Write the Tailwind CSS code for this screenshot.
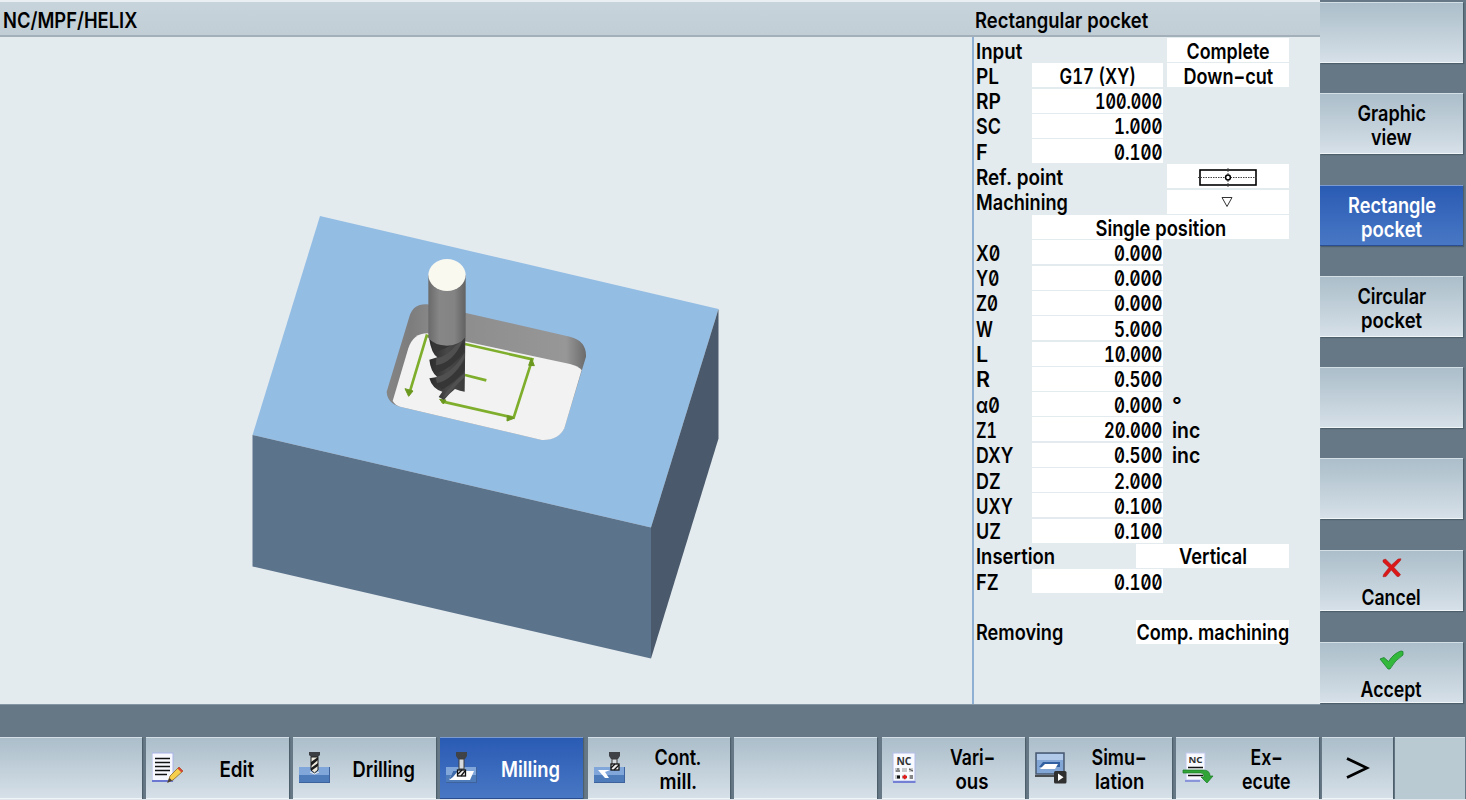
<!DOCTYPE html>
<html lang="en">
<head>
<meta charset="utf-8">
<title>NC/MPF/HELIX</title>
<script src="https://cdn.jsdelivr.net/npm/@tailwindcss/browser@4"></script>
</head>
<body class="w-[1466px] h-[800px] overflow-hidden bg-[#667886] text-black font-[580] text-[21.5px] leading-[24px] font-['Inter','Liberation_Sans',sans-serif] [font-feature-settings:'zero','tnum']">
<div class="flex flex-col w-[1466px] h-[800px]">
  <div class="flex h-[705px]">
    <main class="flex flex-col w-[1320px] bg-[#e4ebee] border-b border-[#8496a2]">
      <header class="flex shrink-0 h-[37px] pt-[6px] pl-[3px] bg-linear-to-b from-[#c8d4db] to-[#c2ced6] border-t-2 border-t-[#e9eff2] border-b-2 border-b-[#a3b0b9]">
        <div class="w-[972px]"><span data-w="134" class="inline-block whitespace-nowrap origin-left">NC/MPF/HELIX</span></div>
        <div class="w-[300px]"><span data-w="173" class="inline-block whitespace-nowrap origin-left">Rectangular pocket</span></div>
      </header>
      <div class="flex flex-1 min-h-0">
        <svg class="w-[972px] h-[666px] shrink-0" viewBox="0 37 972 666">
          <defs>
            <linearGradient id="shank"><stop offset="0" stop-color="#6a6a6a"/><stop offset=".3" stop-color="#878787"/><stop offset=".7" stop-color="#838383"/><stop offset="1" stop-color="#626262"/></linearGradient>
            <linearGradient id="wall"><stop offset="0" stop-color="#858585"/><stop offset=".12" stop-color="#7d7d7d"/><stop offset=".25" stop-color="#8b8b8b"/><stop offset=".9" stop-color="#979797"/><stop offset="1" stop-color="#6b6b6b"/></linearGradient>
            <linearGradient id="flute"><stop offset="0" stop-color="#2b2b2b"/><stop offset=".5" stop-color="#484848"/><stop offset="1" stop-color="#3b3b3b"/></linearGradient>
          </defs>
          <path d="M320 216 718.500 309 651 527.500 252.500 435Z" fill="#94bde4"/>
          <path d="M252.500 435 651 527.500V658.500L252.500 566.500Z" fill="#5c738c"/>
          <path d="M718.500 309V438.500L651 658.500V527.500Z" fill="#4a5a6c"/>
          <g transform="translate(370 240) scale(.33333)">
            <path d="M50 455 118 230Q130 190 172 193L600 290Q650 303 648 350L583 565Q566 600 515 600L90 500Q52 490 50 455Z" fill="url(#wall)"/>
            <path d="M68 483 115 325Q130 280 172 280L600 372Q625 378 635 390L583 565Q565 602 515 600L90 500Q75 495 68 483Z" fill="#f1f2f1"/>
            <g stroke="#7fae2c" stroke-width="8" fill="none">
              <path d="M185 292 170 287 118 460M285 312 487 358 431 533 215 484M285 405 349 421"/>
            </g>
            <path d="M105 446 129 453 116 469ZM476 376 484 354 493 377ZM412 526 432 535 411 543ZM209 478 228 480 220 492Z" fill="#6b981f" stroke="#6b981f" stroke-width="3"/>
            <path d="M177 294Q231 335 286 290L284 455 270 452 255 447 238 462 222 480 206 471 217 455Q187 447 178 415L202 411Q182 396 178 359L202 352Q184 340 177 294Z" fill="url(#flute)"/>
            <path d="M185 302 243 316Q206 337 190 334ZM196 378Q238 370 280 305L284 332Q251 382 200 399ZM198 433Q246 418 284 362L284 392Q250 430 216 449Z" fill="#363636"/>
            <path d="M199 354Q230 352 258 315L277 303Q251 367 198 376ZM197 411Q244 403 284 338V354Q248 420 201 429ZM219 475Q231 442 284 399V411Q246 449 236 462Z" fill="#505050"/>
            <path d="M175 105V294Q193 316 231 317 269 316 287 290V105Z" fill="url(#shank)"/>
            <ellipse cx="231" cy="105" rx="56" ry="48" fill="#f9f9f0"/>
          </g>
        </svg>
        <section id="form" class="flex flex-col flex-1 pt-[1px] pl-[2px] border-l-2 border-[#8fb0d2]"></section>
      </div>
    </main>
    <nav id="side" class="flex flex-col w-[146px] pt-[2px] text-center"></nav>
  </div>
  <div class="h-[32px] shrink-0"></div>
  <nav id="bottom" class="flex h-[62px] shrink-0 text-center"></nav>
  <div class="h-[1px] bg-[#dfe5ea]"></div>
</div>
<script>
const fit = (t, w, o = 'origin-center') => `<span data-w="${w}" class="inline-block whitespace-nowrap ${o}">${t}</span>`;
const refIcon = '<svg class="w-[60px] h-[20px]" viewBox="0 0 60 20"><rect x="2" y="3" width="56" height="15" fill="none" stroke="#000" stroke-width="1.6"/><path d="M0 10.500H60M30 1V20" stroke="#444" stroke-dasharray="1.500 1"/><circle cx="30" cy="10.500" r="2.400" fill="#fff" stroke="#000" stroke-width="1.500"/></svg>';
const triIcon = '<svg class="w-[12px] h-[12px] mr-[2px]" viewBox="0 0 12 12"><path d="M1 1.500H11L6 10.500Z" fill="none" stroke="#333"/></svg>';
// label, label width, value, value width, layout, unit or second value, its width
const rows = [
  ['Input', 46, '', 0, 'R', 'Complete', 83],
  ['PL', 23, 'G17 (XY)', 76, 'B', 'Down−cut', 90],
  ['RP', 25, '100.000', 67, 'N'], ['SC', 25, '1.000', 48, 'N'], ['F', 12, '0.100', 48, 'N'],
  ['Ref. point', 87, '', 0, 'I', refIcon], ['Machining', 92, '', 0, 'I', triIcon],
  ['', 0, 'Single position', 131, 'S'],
  ['X0', 24, '0.000', 48, 'N'], ['Y0', 23, '0.000', 48, 'N'], ['Z0', 22, '0.000', 48, 'N'],
  ['W', 17, '5.000', 48, 'N'], ['L', 12, '10.000', 58, 'N'], ['R', 14, '0.500', 48, 'N'],
  ['α0', 24, '0.000', 48, 'N', '°', 10], ['Z1', 21, '20.000', 58, 'N', 'inc', 28],
  ['DXY', 37, '0.500', 48, 'N', 'inc', 28], ['DZ', 25, '2.000', 48, 'N'],
  ['UXY', 37, '0.100', 48, 'N'], ['UZ', 25, '0.100', 48, 'N'],
  ['Insertion', 79, 'Vertical', 68, 'V'], ['FZ', 23, '0.100', 48, 'N'],
  ['', 0, '', 0, ''], ['Removing', 87, 'Comp. machining', 153, 'V']
];
const box = 'flex h-[24px] items-center bg-white pt-[1px] shrink-0 overflow-visible';
document.getElementById('form').innerHTML = rows.map(([l, lw, v, vw, k, u, uw]) => {
  const label = w => `<div class="${w} shrink-0 pt-[0.5px]">${l ? fit(l, lw, 'origin-left') : ''}</div>`;
  let c = '';
  if (k === 'N') c = label('w-[56px]') + `<div class="${box} w-[131px] pr-[1px] justify-end">${fit(v, vw, 'origin-right')}</div>` + (u ? `<div class="pl-[9px] pt-[0.5px]">${fit(u, uw, 'origin-left')}</div>` : '');
  if (k === 'B') c = label('w-[56px]') + `<div class="${box} w-[131px] justify-center">${fit(v, vw)}</div><div class="${box} w-[122px] ml-[4px] justify-center">${fit(u, uw)}</div>`;
  if (k === 'R') c = label('w-[191px]') + `<div class="${box} w-[122px] justify-center">${fit(u, uw)}</div>`;
  if (k === 'I') c = label('w-[191px]') + `<div class="${box} w-[122px] justify-center">${u}</div>`;
  if (k === 'S') c = label('w-[56px]') + `<div class="${box} w-[257px] justify-center">${fit(v, vw)}</div>`;
  if (k === 'V') c = label('w-[160px]') + `<div class="${box} w-[153px] justify-center">${fit(v, vw)}</div>`;
  return `<div class="flex h-[25.3px] shrink-0">${c}</div>`;
}).join('');

const key = 'bg-linear-to-b from-[#abbeca] to-[#d6e0e8] border-t border-t-[#d3dfe6] border-b border-b-[#f0f5f8] shadow-[1px_1px_1px_#4e5f6c]';
const keyOn = 'bg-linear-to-b from-[#2a5bb4] to-[#4877c4] border-t border-t-[#7b9bd0] border-b border-b-[#2b4e93] text-white shadow-[1px_1px_1px_#4e5f6c]';
const cross = '<svg class="w-[20px] h-[20px]" viewBox="0 0 20 20"><path d="M1 2 3.500 1 9.500 7 16 1 19 .800 18.500 2.500 12 9.500 18.500 16.500 17 18.500 15 18.500 9.300 12 4 18.500 1 18.800 1.500 16.500 7 9.500 1 4Z" fill="#db1717" stroke="#a51818" stroke-width=".5"/></svg>';
const check = '<svg class="w-[25px] h-[20px]" viewBox="0 0 25 20"><path d="M1 9 5 7.500 9.500 11.500Q15 3 22 1L24 1.500V5Q16 10 11 19H9Z" fill="#32b83b" stroke="#16832a" stroke-width=".8"/></svg>';
const side = [
  ['h-[61px]', ''],
  ['mt-[30px] h-[61px]', fit('Graphic', 69) + '<br>' + fit('view', 41)],
  ['mt-[31px] h-[61px]', fit('Rectangle', 88) + '<br>' + fit('pocket', 61), 1],
  ['mt-[30px] h-[61px]', fit('Circular', 69) + '<br>' + fit('pocket', 61)],
  ['mt-[30px] h-[61px]', ''], ['mt-[30px] h-[61px]', ''],
  ['mt-[31px] h-[61px]', cross, 0, fit('Cancel', 59)],
  ['mt-[31px] h-[61px]', check, 0, fit('Accept', 61)]
];
document.getElementById('side').innerHTML = side.map(([h, t, on, cap]) =>
  `<div class="${h} w-[143px] shrink-0 ${on ? keyOn : key}">${cap ? `<div class="flex justify-center h-[34px] pt-[7px]">${t}</div><div>${cap}</div>` : `<div class="pt-[7px]">${t}</div>`}</div>`).join('');

const S = b => `<svg class="w-[32px] h-[32px] shrink-0" viewBox="0 0 32 32">${b}</svg>`;
const slab = '<rect x="0" y="15" width="31" height="9" fill="#80a6da"/><rect x="0" y="23" width="31" height="8" fill="#4e7cba"/><path d="M0 30.500H31M30.500 15V31" stroke="#3d629c"/>';
const mill = x => `<path d="M${x} 0H${x + 11}V4L${x + 9} 7H${x + 2}L${x} 4Z" fill="#3f4246"/><rect x="${x + 3}" y="7" width="5" height="10" fill="#d5dade" stroke="#3c3c3c"/>`;
const pen = S('<rect x="0" y="1" width="21" height="28" fill="#f7f9ff" stroke="#a9b2e8"/><path d="M0 29H21" stroke="#6a78d2" stroke-width="2"/><path d="M3 6.500H18M3 10.500H18M3 14.500H18M3 18.500H18M3 22.500H15" stroke="#111" stroke-width="1.500"/><path d="M16 30 18 24 27 15 31 19 21 28Z" fill="#f6cf4d" stroke="#8a6925" stroke-width=".8"/><path d="M25.500 16.500 27 15 31 19 29.500 20.500Z" fill="#d7433a"/><path d="M15 31 17.500 26 20 28.500Z" fill="#443b38"/>');
const drill = S(slab + '<path d="M10 0H21V3L19 5H12L10 3Z" fill="#3b3e42"/><path d="M12 5H19V18L15.500 21 12 18Z" fill="#ece9dc" stroke="#222"/><path d="M12 10 19 5V8L12 14ZM12 16 19 11V14L12 19Z" fill="#1c1c1c"/><path d="M11 20 15.500 22 20 20" stroke="#eee" fill="none"/>');
const mil = S(slab + '<path d="M7 19H28L24 28H3Z" fill="#fff"/><path d="M7 19H12L7 25 3 28Z" fill="#3d6aaa"/>' + mill(10) + '<rect x="11.500" y="18" width="8" height="6" fill="#eee" stroke="#111" stroke-width="1.300"/><path d="M12 22 16 18M15 24 19 19" stroke="#111" stroke-width="1.300"/>');
const cont = S(slab + '<path d="M4 18H16L11 20 15 26H11Z" fill="#fff"/>' + mill(15) + '<rect x="17" y="12" width="8" height="6" fill="#eee" stroke="#111" stroke-width="1.300"/><path d="M17 16 21 12M20 18 25 13" stroke="#111" stroke-width="1.300"/>');
const vari = S('<rect x="5" y="1" width="22" height="28" fill="#f8faff" stroke="#b3bbea"/><path d="M5 30H27.500" stroke="#7380d4" stroke-width="2"/><text x="8.500" y="13" font-size="10" font-weight="700" textLength="15" lengthAdjust="spacingAndGlyphs" font-family="Noto Sans" fill="#333">NC</text><path d="M7 16H12V20H7ZM14 16H19V20H14ZM21 16H25V20H21ZM7 23H12V27H7ZM14 23H19V27H14ZM21 23H25V27H21Z" fill="#c8c9cb"/><path d="M8 19H12M9 17H11M21 17 25 19M22 24H25M22 26H25" stroke="#444"/><rect x="9" y="23.500" width="3" height="3" fill="#111"/><path d="M14.500 25H19M16.700 22.700V27.300" stroke="#e01b1b" stroke-width="2"/>');
const simu = S('<rect x="1" y="1" width="28" height="21" fill="#82a6d5" stroke="#495a70" stroke-width="1.500"/><path d="M2 2H28V8H2Z" fill="#b2cae9"/><path d="M8 10H25V15H4Z" fill="#315f9f"/><path d="M10 12H23L20 17H5Z" fill="#fff"/><path d="M0 24H24" stroke="#222" stroke-width="1.500"/><rect x="19" y="19" width="12.500" height="12.500" rx="1.500" fill="#303030"/><path d="M23 21.500 28.500 25.300 23 29Z" fill="#fff"/>');
const exec = S('<rect x="4" y="1" width="19" height="27" fill="#f8faff" stroke="#c0c7ee"/><path d="M3 29H18" stroke="#7380d4" stroke-width="1.500"/><text x="6.500" y="11" font-size="9" font-weight="700" textLength="14" lengthAdjust="spacingAndGlyphs" font-family="Noto Sans" fill="#333">NC</text><path d="M6 15.500H21M6 23.500H21" stroke="#111" stroke-width="1.500"/><path d="M1 18H21Q28 18 28 24H31L25 31 19 25H22Q22 21 19 21H1Z" fill="#30a437" stroke="#187a25" stroke-width=".7"/>');
const bottom = [
  ['w-[142px]', '', ''],
  ['w-[143px] ml-[4px]', pen, fit('Edit', 35)],
  ['w-[143px] ml-[4px]', drill, fit('Drilling', 62)],
  ['w-[143px] ml-[4px]', mil, fit('Milling', 59), 1],
  ['w-[142px] ml-[5px]', cont, fit('Cont.', 46) + '<br>' + fit('mill.', 37)],
  ['w-[143px] ml-[4px]', '', ''],
  ['w-[143px] ml-[5px]', vari, fit('Vari−', 45) + '<br>' + fit('ous', 33)],
  ['w-[143px] ml-[4px]', simu, fit('Simu−', 55) + '<br>' + fit('lation', 49)],
  ['w-[143px] ml-[4px]', exec, fit('Ex−', 32) + '<br>' + fit('ecute', 49)]
];
document.getElementById('bottom').innerHTML = bottom.map(([w, i, t, on]) =>
  `<div class="${w} shrink-0 flex items-center pl-[6px] ${on ? keyOn : key}">${i}<div class="flex-1 pt-[1px]">${t}</div></div>`).join('')
  + `<div class="w-[71px] ml-[3px] shrink-0 flex items-center justify-center ${key}"><svg class="w-[24px] h-[22px]" viewBox="0 0 24 22"><path d="M1 1.500 21 11 1 20.500" fill="none" stroke="#000" stroke-width="2.800"/></svg></div>`
  + '<div class="w-[70px] ml-[2px] shrink-0 bg-[#b9cad3] border-t border-[#cfdbe2]"></div>';

// Condense every caption to its designed width, again whenever its natural width changes.
const condense = e => { if (e.offsetWidth) e.style.transform = `scaleX(${e.dataset.w / e.offsetWidth})`; };
const watcher = new ResizeObserver(list => list.forEach(r => condense(r.target)));
document.querySelectorAll('[data-w]').forEach(e => { condense(e); watcher.observe(e); });
addEventListener('load', () => document.querySelectorAll('[data-w]').forEach(condense));
</script>
</body>
</html>
